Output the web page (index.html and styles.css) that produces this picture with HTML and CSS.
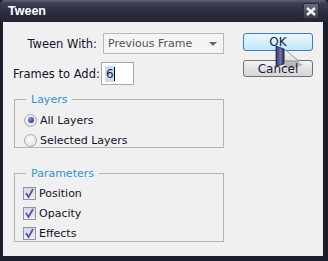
FILE: index.html
```html
<!DOCTYPE html>
<html>
<head>
<meta charset="utf-8">
<link rel="stylesheet" href="styles.css">
</head>
<body>
<div class="window">
  <div class="titlebar">
    <span class="title">Tween</span>
    <span class="close"><svg width="10" height="9" viewBox="0 0 10 9"><path d="M1 1 L9 8 M9 1 L1 8" stroke="#f4f4f4" stroke-width="2.4"/></svg></span>
  </div>
  <div class="content">
    <div class="form">
      <div class="row row1">
        <span class="label">Tween With:</span>
        <div class="select"><span>Previous Frame</span><svg width="8" height="4" viewBox="0 0 8 4"><path d="M0 0 H8 L4 4 Z" fill="#666"/></svg></div>
      </div>
      <div class="row row2">
        <span class="label">Frames to Add:</span>
        <div class="input"><span class="sel">6</span><span class="caret"></span></div>
      </div>
      <fieldset class="group g1">
        <legend>Layers</legend>
        <label class="opt"><span class="radio on"></span>All Layers</label>
        <label class="opt"><span class="radio"></span>Selected Layers</label>
      </fieldset>
      <fieldset class="group g2">
        <legend>Parameters</legend>
        <label class="opt"><span class="check"><svg width="11" height="11" viewBox="0 0 11 11"><path d="M2 5 L4.5 9 L9 1" fill="none" stroke="#55579f" stroke-width="1.8"/></svg></span>Position</label>
        <label class="opt"><span class="check"><svg width="11" height="11" viewBox="0 0 11 11"><path d="M2 5 L4.5 9 L9 1" fill="none" stroke="#55579f" stroke-width="1.8"/></svg></span>Opacity</label>
        <label class="opt"><span class="check"><svg width="11" height="11" viewBox="0 0 11 11"><path d="M2 5 L4.5 9 L9 1" fill="none" stroke="#55579f" stroke-width="1.8"/></svg></span>Effects</label>
      </fieldset>
    </div>
    <div class="buttons">
      <div class="btn ok">OK</div>
      <div class="btn">Cancel</div>
    </div>
  </div>
  <svg class="cursor" width="30" height="28" viewBox="0 0 30 28">
    <defs>
      <linearGradient id="cg" x1="0" y1="0" x2="1" y2="0">
        <stop offset="0" stop-color="#2e355f"/>
        <stop offset="0.55" stop-color="#6e76a8"/>
        <stop offset="1" stop-color="#262c58"/>
      </linearGradient>
      <linearGradient id="wg" x1="0" y1="0" x2="0" y2="1">
        <stop offset="0" stop-color="#ffffff"/>
        <stop offset="1" stop-color="#dcdcdc"/>
      </linearGradient>
    </defs>
    <path d="M11 8 L28 20 L20 23 L9 23 Z" fill="#000" opacity="0.22"/>
    <path d="M9 4 L24 16 L9 16 Z" fill="url(#wg)" stroke="#808080" stroke-width="0.8"/>
    <path d="M1 1 L9 4 L9 19 L1 21 Z" fill="url(#cg)" stroke="#1f2450" stroke-width="0.8"/>
  </svg>
</div>
</body>
</html>
```
FILE: styles.css
```css
html, body {
  margin: 0;
  padding: 0;
  background: #1d1e2c;
}
body {
  width: 328px;
  height: 261px;
  overflow: hidden;
  font-family: "DejaVu Sans", Tahoma, sans-serif;
  font-size: 11px;
  color: #12122a;
}
.window {
  position: relative;
  width: 328px;
  height: 261px;
  box-sizing: border-box;
  background: #1d1e2c;
  border-radius: 5px 5px 0 0;
  display: flex;
  flex-direction: column;
}
.titlebar {
  height: 22px;
  flex: none;
  display: flex;
  align-items: center;
  justify-content: space-between;
  padding: 0 8px 0 8px;
  background: linear-gradient(#62657a 0px, #3c3f52 3px, #2c2e40 12px, #222433 22px);
  border-radius: 5px 5px 0 0;
}
.title {
  color: #fff;
  font-weight: bold;
  font-size: 12.5px;
  font-family: "Liberation Sans", Arial, sans-serif;
}
.close {
  width: 14px;
  height: 14px;
  display: flex;
  align-items: center;
  justify-content: center;
  background: linear-gradient(#6a6d80, #3a3c50);
  border: 1px solid #2a2b3a;
  border-radius: 2px;
  margin-right: 1px;
}
.content {
  flex: 1;
  margin: 0 5px 5px 3px;
  background: #f0f0f0;
  display: flex;
  gap: 19px;
}
.form {
  width: 221px;
  flex: none;
  box-sizing: border-box;
  padding-left: 10px;
  display: flex;
  flex-direction: column;
}
.row {
  display: flex;
  align-items: center;
}
.label {
  width: 84px;
  flex: none;
  text-align: right;
  white-space: nowrap;
  font-size: 11.5px;
}
.row1 {
  margin-top: 11px;
  height: 21px;
}
.row1 .select {
  margin-left: 6px;
  width: 111px;
  height: 19px;
  border: 1px solid #b9b9b9;
  background: #f4f4f4;
  display: flex;
  align-items: center;
  justify-content: space-between;
  padding: 0 6px 0 4px;
  color: #555;
}
.row2 {
  margin-top: 8px;
  height: 23px;
}
.input {
  margin-left: 4px;
  border: 1px solid #a8a8a8;
  background: #fff;
  display: flex;
  align-items: center;
  padding-left: 3px;
  box-sizing: border-box;
  width: 33px;
  height: 23px;
}
.sel {
  background: #c9dcf2;
  color: #1a1a40;
  padding: 1px 0 1px 1px;
  font-size: 12px;
}
.caret {
  width: 1px;
  height: 14px;
  background: #000;
}
.group {
  margin: 0 0 0 1px;
  border: 1px solid #b4b4b4;
  padding: 0 0 0 8px;
  width: 210px;
  box-sizing: border-box;
  display: flex;
  flex-direction: column;
}
.group legend {
  color: #3590d0;
  padding: 0 5px;
  margin-left: 3px;
  font-size: 11px;
  line-height: 13px;
}
.g1 {
  margin-top: 8px;
  height: 55px;
  gap: 6px;
  padding-top: 7px;
}
.g2 {
  margin-top: 19px;
  height: 75px;
  gap: 6px;
  padding-top: 6px;
}
.opt {
  display: flex;
  align-items: center;
  height: 14px;
  gap: 3px;
}
.radio {
  width: 11px;
  height: 11px;
  border-radius: 50%;
  border: 1px solid #a0a8b8;
  background: radial-gradient(circle at 40% 40%, #fdfdfd, #d6dae2);
  display: flex;
  align-items: center;
  justify-content: center;
  margin-left: 1px;
}
.radio.on::after {
  content: "";
  width: 6px;
  height: 6px;
  border-radius: 50%;
  background: radial-gradient(circle at 35% 35%, #8c90d0, #1e2268);
}
.check {
  width: 11px;
  height: 11px;
  border: 1px solid #8f94a8;
  background: linear-gradient(#d8dae2, #eceef2);
  display: flex;
  align-items: center;
  justify-content: center;
}
.buttons {
  display: flex;
  flex-direction: column;
  gap: 9px;
  padding-top: 11px;
}
.btn {
  width: 70px;
  height: 17px;
  box-sizing: border-box;
  border: 1px solid #707070;
  border-radius: 3px;
  background: linear-gradient(#f4f4f4, #e2e2e2 50%, #d6d6d6);
  display: flex;
  align-items: center;
  justify-content: center;
  color: #1a1a40;
  font-size: 12px;
}
.btn.ok {
  height: 18px;
  border-color: #3c7fb1;
  background: linear-gradient(#eaf6fd, #d9f0fc 50%, #bee6fd);
}
.cursor {
  position: absolute;
  left: 275px;
  top: 45px;
}
```
